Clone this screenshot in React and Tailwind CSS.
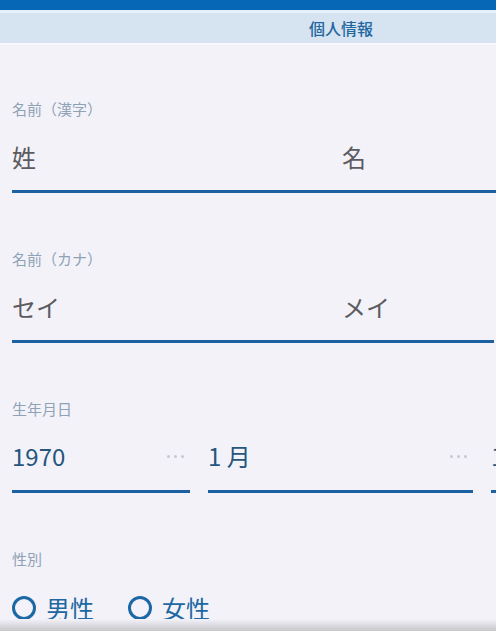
import React from "react";

const labelCls = "h-[20px] leading-[20px] text-[15px] text-[#8ea2b6]";
const lineCls = "h-[3px] bg-[#1c62a3]";

const Dots = () => (
  <div className="flex gap-[4px] items-center">
    <span className="w-[3px] h-[3px] rounded-full bg-[#c2cad6]" />
    <span className="w-[3px] h-[3px] rounded-full bg-[#c2cad6]" />
    <span className="w-[3px] h-[3px] rounded-full bg-[#c2cad6]" />
  </div>
);

const NameBlock = ({ label, first, last, lineWidth }) => (
  <div>
    <div className={labelCls}>{label}</div>
    <div className="mt-[22px] h-[32px] flex items-center text-[24px] text-[#5b5b60]">
      <span className="w-[330px]">{first}</span>
      <span>{last}</span>
    </div>
    <div className={`mt-[17px] ${lineCls} ${lineWidth}`} />
  </div>
);

const DateField = ({ value, width }) => (
  <div className={width}>
    <div className="h-[32px] flex items-center justify-between pr-[6px]">
      <span className="text-[24px] text-[#26557d]">{value}</span>
      <Dots />
    </div>
    <div className={`mt-[18px] ${lineCls}`} />
  </div>
);

const Radio = ({ label }) => (
  <div className="flex items-center gap-[10px]">
    <span className="w-[24px] h-[24px] rounded-full border-[3px] border-[#1c68a5]" />
    <span className="text-[24px] text-[#1d67a2]">{label}</span>
  </div>
);

export default function App() {
  return (
    <div className="relative w-[496px] h-[631px] overflow-hidden bg-[#f3f2f9] font-['Noto_Sans_CJK_JP',sans-serif]">
      <div className="w-[682px]">
        <div className="h-[10px] bg-[#0567b5]" />
        <div className="h-[35px] bg-[#d6e4f2] border-t-[3px] border-b-[2px] border-t-[#e6f0fa] border-b-[#f7f7fc] flex items-center justify-center text-[16px] font-medium text-[#22679f]">
          個人情報
        </div>

        <div className="pl-3 pt-[54px] flex flex-col gap-[56px]">
          <NameBlock label="名前（漢字）" first="姓" last="名" lineWidth="w-[670px]" />
          <NameBlock label="名前（カナ）" first="セイ" last="メイ" lineWidth="w-[482px]" />

          <div>
            <div className={labelCls}>生年月日</div>
            <div className="mt-[21px] flex gap-[18px]">
              <DateField value="1970" width="w-[178px]" />
              <DateField value="1 月" width="w-[265px]" />
              <DateField value="1 日" width="w-[178px]" />
            </div>
          </div>

          <div>
            <div className={labelCls}>性別</div>
            <div className="mt-[23px] h-[32px] flex items-center gap-[34px]">
              <Radio label="男性" />
              <Radio label="女性" />
            </div>
          </div>
        </div>
      </div>
      <div className="absolute left-0 right-0 bottom-0 h-[12px] bg-gradient-to-b from-[#f3f2f9] to-[#c6c6ca]" />
    </div>
  );
}
